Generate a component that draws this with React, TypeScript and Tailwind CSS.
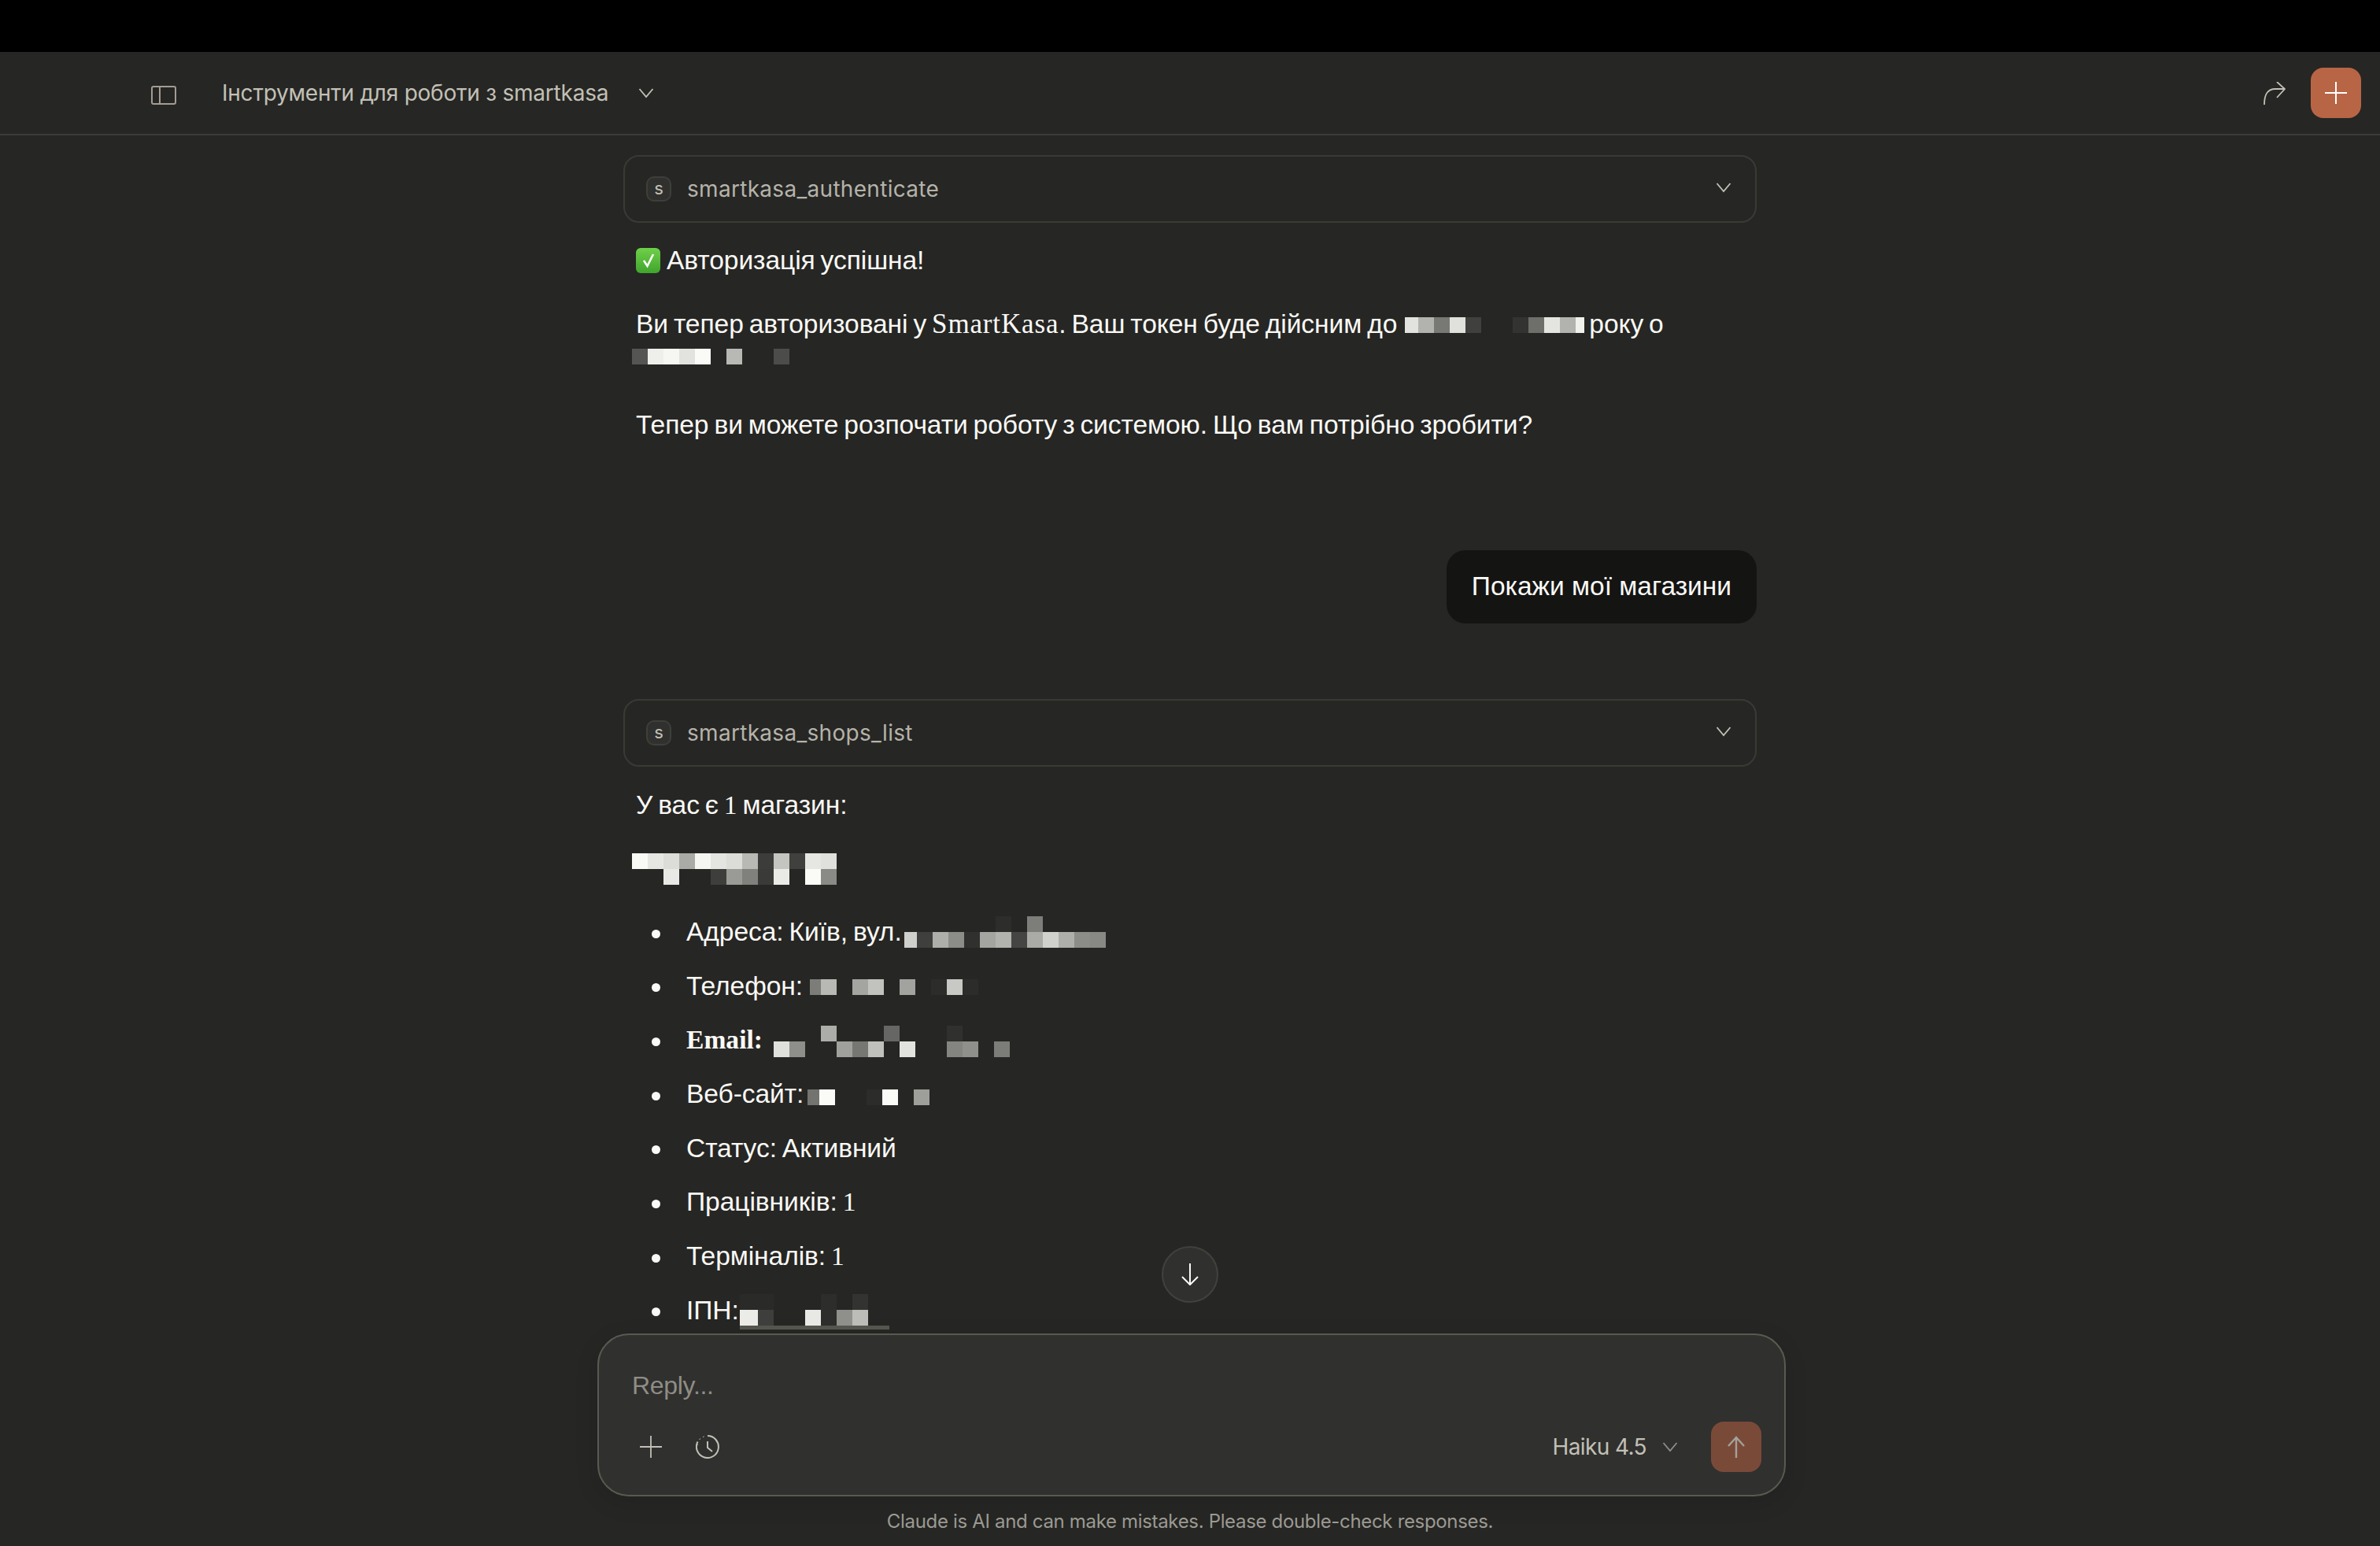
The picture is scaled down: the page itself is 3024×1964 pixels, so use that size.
import React from 'react'

const _ = ''

type MosaicProps = {
  bottom: string[]
  top?: string[]
  first?: number
  last?: number
  className?: string
}

// pixelated redaction blocks, colours come from the data arrays
const Mosaic = ({ bottom, top, first = 20, last = 20, className = '' }: MosaicProps) => {
  const cell = (c: string, i: number, all: string[]) => (
    <span
      key={i}
      className="block h-5"
      style={{ width: i === 0 ? first : i === all.length - 1 ? last : 20, backgroundColor: c || 'transparent' }}
    />
  )
  return (
    <span className={`inline-flex flex-col shrink-0 ${className}`}>
      {top && <span className="flex">{top.map(cell)}</span>}
      <span className="flex">{bottom.map(cell)}</span>
    </span>
  )
}

const Chevron = ({ className = '' }: { className?: string }) => (
  <svg viewBox="0 0 20 14" fill="none" stroke="currentColor" strokeWidth="1.8" className={className}>
    <path d="M1.5 2 L10 12 L18.5 2" />
  </svg>
)

const ToolCard = ({ name }: { name: string }) => (
  <div className="flex items-center h-[86px] rounded-[20px] border-2 border-[#3a3a35] pl-[27px] pr-[30px]">
    <div className="flex items-center justify-center w-8 h-8 rounded-[10px] border-2 border-[#3e3e3a] bg-[#30302e] pb-[2px] text-[22px] text-[#c2c0b6] font-['Inter',sans-serif]">
      s
    </div>
    <span className="ml-5 text-[28px] leading-10 tracking-[0.3px] text-[#b5b3aa] font-['Inter',sans-serif]">{name}</span>
    <Chevron className="ml-auto w-5 h-[14px] text-[#c2c0b6] mb-1" />
  </div>
)

const Line = ({ children, className = '' }: { children: React.ReactNode; className?: string }) => (
  <div className={`flex items-center h-10 pl-4 pb-[3px] whitespace-pre text-[33.6px] leading-10 tracking-[-0.08px] [word-spacing:-2.3px] text-[#faf9f5] ${className}`}>
    {children}
  </div>
)

const Item = ({ children }: { children: React.ReactNode }) => (
  <li className="flex items-end h-10 pb-[2px] whitespace-pre text-[33.6px] leading-10 tracking-[-0.08px] [word-spacing:-2.3px] text-[#faf9f5]">
    <span className="self-center w-[11px] h-[11px] rounded-full bg-[#faf9f5] mt-[2px] ml-9 mr-[33px] shrink-0" />
    {children}
  </li>
)

const Serif = ({ children }: { children: React.ReactNode }) => (
  <span className="font-['Liberation_Serif',serif]">{children}</span>
)

export default function App() {
  return (
    <div className="w-[3024px] h-[1964px] flex flex-col overflow-hidden bg-[#262624] font-['Liberation_Sans',sans-serif]">
      <div className="h-[66px] bg-black shrink-0" />

      {/* Header */}
      <header className="flex items-center h-[106px] shrink-0 border-b-2 border-[#3b3b38] pl-[192px] pr-6">
        <svg viewBox="0 0 32 24" fill="none" stroke="#a39c92" strokeWidth="2" className="w-8 h-6 mt-[6px]">
          <rect x="1" y="1" width="30" height="22" rx="2" />
          <path d="M11 1 V23" />
        </svg>
        <span className="ml-[58px] text-[28px] leading-10 tracking-[-0.23px] text-[#c2c0b6] font-['Inter',sans-serif]">
          Інструменти для роботи з smartkasa
        </span>
        <Chevron className="ml-[38px] w-5 h-[14px] text-[#c2c0b6]" />
        <svg viewBox="0 0 28 29" fill="none" stroke="#c2c0b6" strokeWidth="1.8" className="ml-auto w-7 h-[29px]">
          <path d="M1 29 C1 16 5 9 15 9 L27 9 M17 0 L27 9 L17 20" />
        </svg>
        <div className="flex items-center justify-center w-16 h-16 ml-8 rounded-2xl bg-[#b86545]">
          <svg viewBox="0 0 28 28" stroke="#ffffff" strokeWidth="2" className="w-7 h-7">
            <path d="M14 0 V28 M0 14 H28" />
          </svg>
        </div>
      </header>

      {/* Conversation */}
      <main className="relative flex-1 min-h-0 overflow-hidden">
        <div className="w-[1440px] ml-[792px] pt-[25px]">
          <ToolCard name="smartkasa_authenticate" />
          <Line className="mt-[29px]">
            <span className="flex items-center justify-center w-[31px] h-8 mr-2 rounded-md bg-gradient-to-b from-[#6fd04a] to-[#3fa52c]">
              <svg viewBox="0 0 20 20" fill="none" stroke="#ffffff" strokeWidth="2.6" className="w-5 h-5">
                <path d="M4 10 L8.5 17 L16 2" />
              </svg>
            </span>
            Авторизація успішна!
          </Line>
          <Line className="mt-[41px] items-end">
            <span className="self-center">Ви тепер авторизовані у </span>
            <span className="self-center">
              <span className="font-['Liberation_Serif',serif] text-[35px] tracking-[0.85px]">SmartKasa</span>. Ваш токен буде дійсним до
            </span>
            <Mosaic
              className="ml-[10px] mb-[7px]"
              first={17}
              last={11}
              bottom={['#e2e2de', '#b2b2ae', '#787874', '#e0e0dc', '#40403e', _, _, '#333331', '#6e6e6a', '#e4e4e0', '#b2b2ae', '#f0f0ec']}
            />
            <span className="self-center ml-[6px]">року о</span>
          </Line>
          <div className="flex items-center h-10 pl-[11px]">
            <Mosaic bottom={['#555553', '#eeeeea', '#f6f6f2', '#e2e2de', '#fafaf6', _, '#b8b8b4', _, _, '#4c4c4a']} />
          </div>
          <Line className="mt-12">Тепер ви можете розпочати роботу з системою. Що вам потрібно зробити?</Line>

          <div className="flex justify-end mt-[138px]">
            <div className="flex items-center h-[93px] px-8 rounded-3xl bg-[#141413] text-[33.5px] text-[#faf9f5]">
              Покажи мої магазини
            </div>
          </div>

          <div className="mt-24">
            <ToolCard name="smartkasa_shops_list" />
          </div>

          <Line className="mt-[30px]">
            У вас є <Serif>1</Serif> магазин:
          </Line>
          <div className="mt-10 pl-[11px]">
            <Mosaic
              top={['#f9f9f5', '#e6e6e2', '#dcdcd8', '#aaaaa6', '#f5f5f1', '#e4e4e0', '#dcdcd8', '#b8b8b4', '#3c3c3a', '#c4c4c0', '#40403e', '#e6e6e2', '#e0e0dc']}
              bottom={[_, _, '#e8e8e4', _, _, '#3e3e3c', '#9a9a96', '#80807c', '#3a3a38', '#eaeae6', _, '#fafaf6', '#8a8a86']}
            />
          </div>

          <ul className="flex flex-col gap-[28.7px] mt-[42px]">
            <Item>
              Адреса: Київ, вул.
              <Mosaic
                className="ml-[3px]"
                first={16}
                top={[_, _, _, _, _, _, '#2d2d2b', _, '#7d7d79', _, _, _, _]}
                bottom={['#cfcfcb', '#3f3f3d', '#aeaeaa', '#8c8c88', '#30302e', '#a4a4a0', '#b2b2ae', '#454543', '#aaaaa6', '#d0d0cc', '#aeaeaa', '#8c8c88', '#888884']}
              />
            </Item>
            <Item>
              Телефон:
              <Mosaic
                className="ml-[9px] mb-[9px]"
                first={14}
                bottom={['#7c7c78', '#b8b8b4', _, '#a4a4a0', '#c2c2be', _, '#a2a29e', _, '#2c2c2a', '#c8c8c4', '#2c2c2a']}
              />
            </Item>
            <Item>
              <span className="font-['Liberation_Serif',serif] font-bold tracking-normal">Email:</span>
              <Mosaic
                className="ml-[14px] mb-[-2px]"
                top={[_, _, _, '#acaca8', _, _, _, '#666664', _, _, _, '#30302e', _, _, _]}
                bottom={['#e0e0dc', '#8e8e8a', _, _, '#a0a09c', '#767672', '#c0c0bc', _, '#e2e2de', _, _, '#848480', '#8f8f8b', _, '#7c7c78']}
              />
            </Item>
            <Item>
              Веб-сайт:
              <Mosaic
                className="ml-[5px] mb-[6px]"
                first={15}
                bottom={['#737370', '#fafaf7', _, _, '#2c2c2a', '#fafaf7', _, '#9e9e9a']}
              />
            </Item>
            <Item>Статус: Активний</Item>
            <Item>
              Працівників: <Serif>1</Serif>
            </Item>
            <Item>
              Терміналів: <Serif>1</Serif>
            </Item>
            <Item>
              ІПН:
              <span className="relative flex ml-[1px] mb-[1px]">
                <Mosaic
                  first={23}
                  top={['#2a2a28', '#2a2a28', _, _, _, '#2d2d2b', _, '#333331']}
                  bottom={['#ebebe7', '#3e3e3c', _, _, '#e8e8e4', '#2d2d2b', '#8f8f8b', '#bcbcb8']}
                />
                <span className="absolute left-0 top-10 w-[190px] h-[5px] bg-[#55554f]" />
              </span>
            </Item>
          </ul>
        </div>

        <button className="absolute left-[1476px] top-[1411px] flex items-center justify-center w-[72px] h-[72px] rounded-full border-2 border-[#41413d] bg-[#30302e]">
          <svg viewBox="0 0 24 28" fill="none" stroke="#faf9f5" strokeWidth="2" className="w-6 h-7">
            <path d="M12 0 V27 M2 17 L12 27 L22 17" />
          </svg>
        </button>
      </main>

      {/* Composer */}
      <div className="shrink-0 w-[1510px] h-[207px] ml-[759px] flex flex-col rounded-[40px] border-2 border-[#5a5952] bg-[#30302e] shadow-[0_8px_30px_rgba(0,0,0,0.12)]">
        <div className="mt-[44px] ml-[42px] text-[32px] leading-10 tracking-[-0.3px] text-[#8f8d86]">Reply...</div>
        <div className="flex items-center mt-[26px] pl-[52px] pr-[29px]">
          <svg viewBox="0 0 28 28" stroke="#c2c0b6" strokeWidth="1.8" className="w-7 h-7">
            <path d="M14 0 V28 M0 14 H28" />
          </svg>
          <svg viewBox="0 0 30 30" fill="none" stroke="#c2c0b6" strokeWidth="2" className="w-[30px] h-[30px] ml-[43px]">
            <path d="M15 1 A14 14 0 1 1 2.5 8.5" />
            <path d="M15 8 V16 L21 21" />
            <path d="M5 5 L5.5 5.5 M9.5 2 L10 2.5 M2 12 L2 12.8" strokeWidth="2.2" />
          </svg>
          <span className="ml-auto text-[28px] leading-10 tracking-[-0.6px] text-[#c2c0b6] font-['Inter',sans-serif]">Haiku 4.5</span>
          <Chevron className="ml-5 w-5 h-[14px] text-[#8f8d86]" />
          <div className="flex items-center justify-center w-16 h-16 ml-[42px] rounded-2xl bg-[#7a4a39]">
            <svg viewBox="0 0 24 28" fill="none" stroke="#a3a19a" strokeWidth="2.4" className="w-6 h-7">
              <path d="M12 28 V2 M2 13 L12 2 L22 13" />
            </svg>
          </div>
        </div>
      </div>

      <div className="h-[63px] shrink-0 flex items-center justify-center text-[24px] tracking-[-0.33px] text-[#9b9a92] font-['Inter',sans-serif]">
        Claude is AI and can make mistakes. Please double-check responses.
      </div>
    </div>
  )
}
